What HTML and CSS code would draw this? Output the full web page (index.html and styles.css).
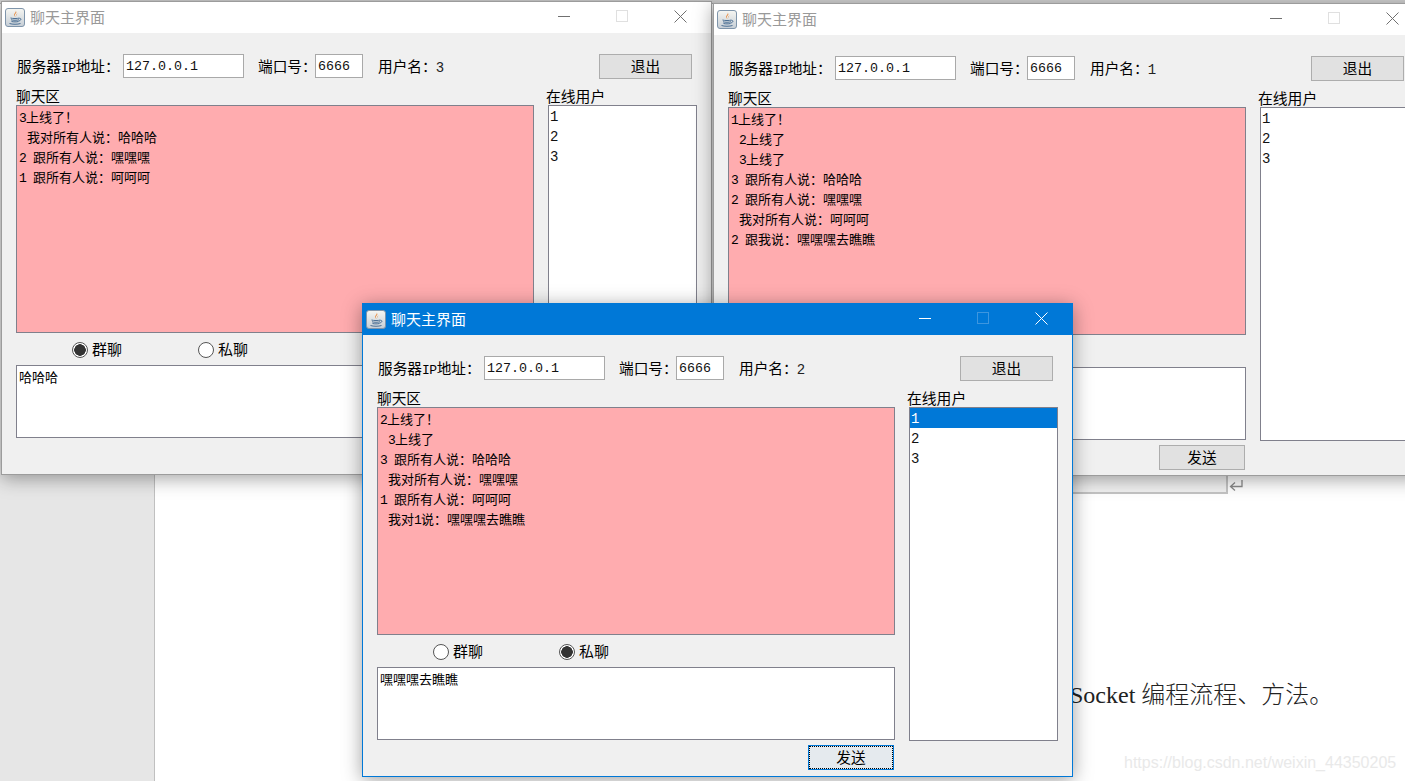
FILE: index.html
```html
<!DOCTYPE html>
<html lang="zh-CN">
<head>
<meta charset="utf-8">
<title>聊天主界面</title>
<link rel="stylesheet" href="styles.css">
</head>
<body>
<svg class="defs" width="0" height="0" aria-hidden="true">
  <defs>
    <linearGradient id="jg" x1="0" y1="0" x2="0" y2="1"><stop offset="0" stop-color="#f6f6f2"/><stop offset="1" stop-color="#c6ced6"/></linearGradient>
    <symbol id="java" viewBox="0 0 20 19">
      <rect x=".5" y=".5" width="19" height="18" rx="2.5" fill="url(#jg)" stroke="#7f95ab"/>
      <path d="M10.5 2.5c1.5 1.8-2.2 3-1.2 5 .3.7.9 1.2 1.2 1.7-.1-1.200-1.100-1.700-.6-2.800.5-1 2.600-1.700.6-3.900z" fill="#e8802c"/>
      <path d="M12.500 5.500c-1.200.8-1.700 1.500-1.100 2.800-.1-1 .3-1.700 1.100-2.800z" fill="#e8802c"/>
      <path d="M5.500 10c2 .7 7 .7 9 0M6 11.800c2 .6 6 .6 8 0M6.500 13.500c2 .5 5 .5 7 0M4.500 15.500c3 1 8 1 11 0M14.500 10.500c2-.5 2 2-.8 2.500" fill="none" stroke="#4b6f94" stroke-width="1"/>
    </symbol>
    <symbol id="min" viewBox="0 0 13 13"><path d="M0 6.500h12" fill="none" stroke="currentColor"/></symbol>
    <symbol id="max" viewBox="0 0 13 13"><rect x=".5" y=".5" width="11" height="11" fill="none" stroke="currentColor"/></symbol>
    <symbol id="close" viewBox="0 0 13 13"><path d="M.5.500l12 12M12.500.500l-12 12" fill="none" stroke="currentColor"/></symbol>
  </defs>
</svg>

<div class="doc">
  <div class="strip"></div>
  <div class="doc-main">
    <aside class="doc-side"></aside>
    <main class="doc-page">
      <div class="doc-row">
        <div class="doc-box"></div>
        <svg class="doc-return" width="14" height="13" viewBox="0 0 14 13"><path d="M13 1v6.500H2M6 3.500L1.500 7.500 6 11.500" fill="none" stroke="#8a8a8a" stroke-width="1.300"/></svg>
      </div>
      <p class="doc-text">Socket 编程流程、方法。</p>
    </main>
  </div>
</div>
<div class="watermark">https://blog.csdn.net/weixin_44350205</div>

<section class="win win-a">
  <header class="title">
    <svg class="jicon"><use href="#java"/></svg>
    <span class="title-text">聊天主界面</span>
    <div class="ctrls">
      <span class="ctrl"><svg class="cicon"><use href="#min"/></svg></span>
      <span class="ctrl ctrl-off"><svg class="cicon"><use href="#max"/></svg></span>
      <span class="ctrl"><svg class="cicon"><use href="#close"/></svg></span>
    </div>
  </header>
  <div class="body">
    <div class="top">
      <label class="lb lb-ip">服务器<span class="h">IP</span>地址：</label>
      <input class="field f-ip" value="127.0.0.1" readonly>
      <label class="lb lb-port">端口号：</label>
      <input class="field f-port" value="6666" readonly>
      <label class="lb lb-user">用户名：<span class="u">3</span></label>
      <button class="btn btn-quit">退出</button>
    </div>
    <div class="main">
      <div class="left">
        <div class="cap">聊天区</div>
        <div class="chat">
          <div class="line"><span class="n">3</span>上线了！</div>
          <div class="line"><span class="sp"></span>我对所有人说：哈哈哈</div>
          <div class="line"><span class="n">2</span><span class="n">&nbsp;</span>跟所有人说：嘿嘿嘿</div>
          <div class="line"><span class="n">1</span><span class="n">&nbsp;</span>跟所有人说：呵呵呵</div>
        </div>
        <div class="radios">
          <label class="radio"><span class="dot on"></span>群聊</label>
          <label class="radio"><span class="dot"></span>私聊</label>
        </div>
        <div class="msg">哈哈哈</div>
        <div class="send-row"><button class="btn btn-send">发送</button></div>
      </div>
      <div class="right">
        <div class="cap cap-on">在线用户</div>
        <ul class="list"><li>1</li><li>2</li><li>3</li></ul>
      </div>
    </div>
  </div>
</section>

<section class="win win-b">
  <header class="title">
    <svg class="jicon"><use href="#java"/></svg>
    <span class="title-text">聊天主界面</span>
    <div class="ctrls">
      <span class="ctrl"><svg class="cicon"><use href="#min"/></svg></span>
      <span class="ctrl ctrl-off"><svg class="cicon"><use href="#max"/></svg></span>
      <span class="ctrl"><svg class="cicon"><use href="#close"/></svg></span>
    </div>
  </header>
  <div class="body">
    <div class="top">
      <label class="lb lb-ip">服务器<span class="h">IP</span>地址：</label>
      <input class="field f-ip" value="127.0.0.1" readonly>
      <label class="lb lb-port">端口号：</label>
      <input class="field f-port" value="6666" readonly>
      <label class="lb lb-user">用户名：<span class="u">1</span></label>
      <button class="btn btn-quit">退出</button>
    </div>
    <div class="main">
      <div class="left">
        <div class="cap">聊天区</div>
        <div class="chat">
          <div class="line"><span class="n">1</span>上线了！</div>
          <div class="line"><span class="sp"></span><span class="n">2</span>上线了</div>
          <div class="line"><span class="sp"></span><span class="n">3</span>上线了</div>
          <div class="line"><span class="n">3</span><span class="n">&nbsp;</span>跟所有人说：哈哈哈</div>
          <div class="line"><span class="n">2</span><span class="n">&nbsp;</span>跟所有人说：嘿嘿嘿</div>
          <div class="line"><span class="sp"></span>我对所有人说：呵呵呵</div>
          <div class="line"><span class="n">2</span><span class="n">&nbsp;</span>跟我说：嘿嘿嘿去瞧瞧</div>
        </div>
        <div class="radios">
          <label class="radio"><span class="dot"></span>群聊</label>
          <label class="radio"><span class="dot on"></span>私聊</label>
        </div>
        <div class="msg"></div>
        <div class="send-row"><button class="btn btn-send">发送</button></div>
      </div>
      <div class="right">
        <div class="cap cap-on">在线用户</div>
        <ul class="list"><li>1</li><li>2</li><li>3</li></ul>
      </div>
    </div>
  </div>
</section>

<section class="win win-c active">
  <header class="title">
    <svg class="jicon"><use href="#java"/></svg>
    <span class="title-text">聊天主界面</span>
    <div class="ctrls">
      <span class="ctrl"><svg class="cicon"><use href="#min"/></svg></span>
      <span class="ctrl ctrl-off"><svg class="cicon"><use href="#max"/></svg></span>
      <span class="ctrl"><svg class="cicon"><use href="#close"/></svg></span>
    </div>
  </header>
  <div class="body">
    <div class="top">
      <label class="lb lb-ip">服务器<span class="h">IP</span>地址：</label>
      <input class="field f-ip" value="127.0.0.1" readonly>
      <label class="lb lb-port">端口号：</label>
      <input class="field f-port" value="6666" readonly>
      <label class="lb lb-user">用户名：<span class="u">2</span></label>
      <button class="btn btn-quit">退出</button>
    </div>
    <div class="main">
      <div class="left">
        <div class="cap">聊天区</div>
        <div class="chat">
          <div class="line"><span class="n">2</span>上线了！</div>
          <div class="line"><span class="sp"></span><span class="n">3</span>上线了</div>
          <div class="line"><span class="n">3</span><span class="n">&nbsp;</span>跟所有人说：哈哈哈</div>
          <div class="line"><span class="sp"></span>我对所有人说：嘿嘿嘿</div>
          <div class="line"><span class="n">1</span><span class="n">&nbsp;</span>跟所有人说：呵呵呵</div>
          <div class="line"><span class="sp"></span>我对<span class="n">1</span>说：嘿嘿嘿去瞧瞧</div>
        </div>
        <div class="radios">
          <label class="radio"><span class="dot"></span>群聊</label>
          <label class="radio"><span class="dot on"></span>私聊</label>
        </div>
        <div class="msg">嘿嘿嘿去瞧瞧</div>
        <div class="send-row"><button class="btn btn-send focus">发送</button></div>
      </div>
      <div class="right">
        <div class="cap cap-on">在线用户</div>
        <ul class="list"><li class="sel">1</li><li>2</li><li>3</li></ul>
      </div>
    </div>
  </div>
</section>
</body>
</html>
```
FILE: styles.css
```css
* { box-sizing: border-box; }
html, body { margin: 0; height: 100%; }
body {
  position: relative;
  width: 1405px;
  height: 781px;
  overflow: hidden;
  background: #fff;
  font-family: "Noto Sans CJK SC", sans-serif;
}
.defs { position: absolute; }

/* document behind the windows */
.doc { display: flex; flex-direction: column; height: 781px; }
.strip { height: 4px; background: #d4d4d4; border-bottom: 1px solid #a8a8a8; }
.doc-main { display: flex; flex: 1; }
.doc-side { width: 155px; background: #e6e6e6; border-right: 1px solid #c0c0c0; }
.doc-page { flex: 1; background: #fff; }
.doc-row { display: flex; align-items: flex-end; margin: 466px 0 0 745px; height: 24px; }
.doc-box { width: 328px; height: 24px; background: #f1f1f1; border: 2px solid #c4c4c4; border-width: 0 2px 2px 0; }
.doc-return { margin: 0 0 2px 1px; }
.doc-text {
  margin: 184px 0 0 915px;
  font-family: "Liberation Serif", "Noto Sans CJK SC", serif;
  font-size: 24px;
  line-height: 34px;
  font-weight: 300;
  color: #222;
  white-space: nowrap;
}
.watermark {
  position: absolute;
  left: 1124px;
  top: 752px;
  font-family: "Liberation Sans", sans-serif;
  font-size: 16px;
  line-height: 22px;
  color: #e9e9e9;
  white-space: nowrap;
}

/* windows */
.win {
  position: absolute;
  width: 711px;
  height: 473px;
  background: #f0f0f0;
  border: 1px solid #9c9c9c;
  box-shadow: 0 3px 18px rgba(0, 0, 0, .38);
  display: flex;
  flex-direction: column;
  color: #000;
}
.win-a { left: 1px; top: 1px; height: 474px; }
.win-b { left: 713px; top: 3px; }
.win-c { left: 362px; top: 303px; height: 474px; border-color: #0078d7; }

.title {
  flex: none;
  height: 31px;
  display: flex;
  align-items: center;
  padding-left: 3px;
  background: #fff;
  color: #999;
}
.active .title { background: #0078d7; color: #fff; }
.jicon { width: 20px; height: 19px; flex: none; }
.title-text { margin-left: 5px; padding-bottom: 2px; font-size: 15px; line-height: 20px; }
.ctrls { margin-left: auto; padding-right: 2px; display: flex; }
.ctrl { width: 58px; height: 31px; padding-bottom: 2px; display: flex; align-items: center; justify-content: center; color: #707070; }
.ctrl-off { color: #e0e0e0; }
.active .ctrl { color: #fff; }
.active .ctrl-off { color: #3d96df; }
.cicon { width: 13px; height: 13px; }

.body { flex: 1; padding: 21px 14px 0; }
.top { display: flex; align-items: flex-start; height: 33px; padding-left: 1px; padding-right: 5px; }
.lb { font-size: 14.670px; line-height: 24px; white-space: nowrap; }
.lb-ip { width: 106px; }
.lb-port { width: 57px; margin-left: 14px; }
.lb-user { margin-left: 15px; }
.h { font-family: "Liberation Mono", monospace; font-size: 13px; letter-spacing: -.47px; }
.u { display: inline-block; width: 8px; line-height: 20px; margin-left: -1px; font-family: "Liberation Mono", monospace; font-size: 14px; color: #222; }
.field {
  height: 24px;
  padding: 0 2px;
  border: 1px solid #a9a9a9;
  border-radius: 0;
  background: #fff;
  color: #111;
  font-family: "Liberation Mono", monospace;
  font-size: 13.330px;
  outline: 0;
}
.f-ip { width: 121px; }
.f-port { width: 48px; }
.btn {
  height: 25px;
  padding: 0 0 2px;
  border: 1px solid #adadad;
  background: #e1e1e1;
  color: #000;
  font-family: "Noto Sans CJK SC", sans-serif;
  font-size: 14.670px;
  line-height: 20px;
}
.btn-quit { width: 93px; margin-left: auto; }

.main { display: flex; gap: 14px; }
.left { width: 518px; }
.right { width: 149px; }
.cap { height: 18px; font-size: 14.670px; line-height: 18px; white-space: nowrap; }
.left .cap { padding-left: 1px; margin-left: -1px; }
.cap-on { margin-left: -2px; font-size: 14.800px; }
.chat {
  height: 228px;
  padding: 1px 2px;
  background: #ffacaf;
  border: 1px solid #80808c;
}
.line, .msg, .list li { font-size: 13px; line-height: 20px; white-space: nowrap; }
.line { height: 20px; overflow: hidden; }
.n { display: inline-block; width: 7px; line-height: 14px; font-family: "Liberation Mono", monospace; font-size: 13px; }
.sp { display: inline-block; width: 8px; }
.radios { height: 32px; padding: 9px 0 0 56px; display: flex; }
.radio { width: 126px; display: flex; align-items: flex-start; gap: 4px; font-size: 15px; line-height: 13px; }
.dot {
  width: 16px;
  height: 16px;
  flex: none;
  border-radius: 50%;
  border: 1px solid #555;
  background: #fff;
}
.dot.on { background: radial-gradient(circle, #333 0, #333 5.500px, #fff 6px); }
.msg {
  height: 73px;
  padding: 1px 2px;
  background: #fff;
  border: 1px solid #80808c;
}
.send-row { display: flex; justify-content: flex-end; padding: 5px 1px 0 0; }
.btn-send { width: 86px; }
.btn-send.focus {
  border-color: #0078d7;
  background: #e5eaee;
  outline: 1px dotted #000;
  outline-offset: -2px;
}
.list {
  margin: 0;
  padding: 0;
  list-style: none;
  height: 334px;
  background: #fff;
  border: 1px solid #80808c;
}
.list li { height: 20px; padding-left: 1px; font-family: "Liberation Mono", monospace; font-size: 14px; line-height: 23px; color: #111; }
.list li.sel { background: #0078d7; color: #fff; }
```
